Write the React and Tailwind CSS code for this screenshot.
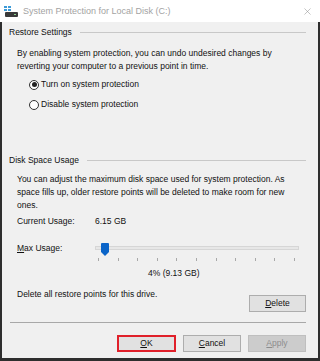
import { X } from "lucide-react";

const FONT = { fontFamily: '"Liberation Sans", Arial, sans-serif' };

function GroupHeader({ label }) {
  return (
    <div className="flex items-center gap-[8px] pl-[7px] pr-[12px] h-[13px]">
      <span className="whitespace-nowrap">{label}</span>
      <div className="flex-1 h-px bg-[#c8c8c8]" />
    </div>
  );
}

function Radio({ checked, label }) {
  return (
    <div className="flex items-center gap-[2px] h-[13px]">
      <div className="w-[10px] h-[10px] rounded-full border border-[#333] bg-white flex items-center justify-center">
        {checked && <div className="w-[5px] h-[5px] rounded-full bg-[#222]" />}
      </div>
      <span>{label}</span>
    </div>
  );
}

function Btn({ children, className = "" }) {
  return (
    <div className={`h-[17px] flex items-center justify-center ${className}`}>
      {children}
    </div>
  );
}

export default function App() {
  const ticks = Array.from({ length: 11 });
  return (
    <div className="w-[320px] h-[361px] bg-white flex flex-col text-[8.5px] text-[#111] leading-[13px]" style={FONT}>
      {/* title bar */}
      <div className="h-[22px] bg-white flex items-center pl-[4px] pr-[7px] shrink-0">
        <svg width="14" height="11" viewBox="0 0 14 11" className="shrink-0">
          <rect x="0" y="0" width="3" height="2" fill="#3d9bd8" />
          <rect x="4" y="0" width="3" height="2" fill="#3d9bd8" />
          <rect x="0" y="3" width="3" height="2" fill="#3d9bd8" />
          <rect x="4" y="3" width="3" height="2" fill="#3d9bd8" />
          <rect x="1" y="6" width="13" height="5" rx="1" fill="#3a3a3a" />
          <rect x="10" y="8" width="2" height="1" fill="#8ed08e" />
        </svg>
        <span className="ml-[5px] text-[9px] text-[#a3a3a3]">System Protection for Local Disk (C:)</span>
        <div className="flex-1" />
        <X size={11} strokeWidth={1.1} className="text-[#8a8a8a]" />
      </div>

      <div className="flex-1 bg-[#f0f0f0] flex flex-col pt-[4px] border-l-2 border-r-2 border-b-[3px] border-[#2e2e2e]">
        <GroupHeader label="Restore Settings" />
        <div className="pl-[15px] mt-[8px]">
          By enabling system protection, you can undo undesired changes by
          <br />
          reverting your computer to a previous point in time.
        </div>
        <div className="pl-[27px] mt-[5px] flex flex-col gap-[7px]">
          <Radio checked label="Turn on system protection" />
          <Radio label="Disable system protection" />
        </div>

        <div className="mt-[43px]">
          <GroupHeader label="Disk Space Usage" />
        </div>
        <div className="pl-[15px] mt-[6px]">
          You can adjust the maximum disk space used for system protection. As
          <br />
          space fills up, older restore points will be deleted to make room for new
          <br />
          ones.
        </div>
        <div className="pl-[15px] mt-[3px] flex">
          <span className="w-[78px]">Current Usage:</span>
          <span>6.15 GB</span>
        </div>

        <div className="pl-[15px] mt-[14px] flex items-start">
          <span className="w-[78px]">
            <span className="underline">M</span>ax Usage:
          </span>
          <div className="w-[204px] flex flex-col">
            <div className="relative h-[16px]">
              <div className="absolute left-0 right-0 top-[4px] h-[4px] bg-[#e7e7e7] border border-[#d6d6d6]" />
              <svg width="8" height="13" viewBox="0 0 8 13" className="absolute left-[6px] top-[1px]">
                <path d="M0 1 Q0 0 1 0 H7 Q8 0 8 1 V9 L4 13 L0 9 Z" fill="#0a64c8" />
              </svg>
            </div>
            <div className="flex justify-between pl-[3px] pr-[4px] h-[4px]">
              {ticks.map((_, i) => (
                <div key={i} className="w-px h-[3px] bg-[#a8a8a8]" />
              ))}
            </div>
          </div>
        </div>
        <div className="mt-[5px] pl-[146px]">4% (9.13 GB)</div>

        <div className="flex items-start pl-[15px] pr-[12px] mt-[8px]">
          <span className="flex-1">Delete all restore points for this drive.</span>
          <Btn className="w-[57px] mt-[7px] bg-[#e1e1e1] border border-[#adadad]">
            <span className="underline">D</span>elete
          </Btn>
        </div>

        <div className="ml-[8px] mr-[12px] mt-[10px] h-px bg-[#a8a8a8]" />

        <div className="flex justify-end gap-[7px] pr-[12px] mt-[12px]">
          <Btn className="w-[59px] bg-[#e1e1e1] border-2 border-[#e0202a]">
            <span className="underline">O</span>K
          </Btn>
          <Btn className="w-[58px] bg-[#e1e1e1] border border-[#adadad]">
            <span className="underline">C</span>ancel
          </Btn>
          <Btn className="w-[58px] bg-[#cccccc] border border-[#bfbfbf] text-[#8c8c8c]">
            <span className="underline">A</span>pply
          </Btn>
        </div>
      </div>
    </div>
  );
}
